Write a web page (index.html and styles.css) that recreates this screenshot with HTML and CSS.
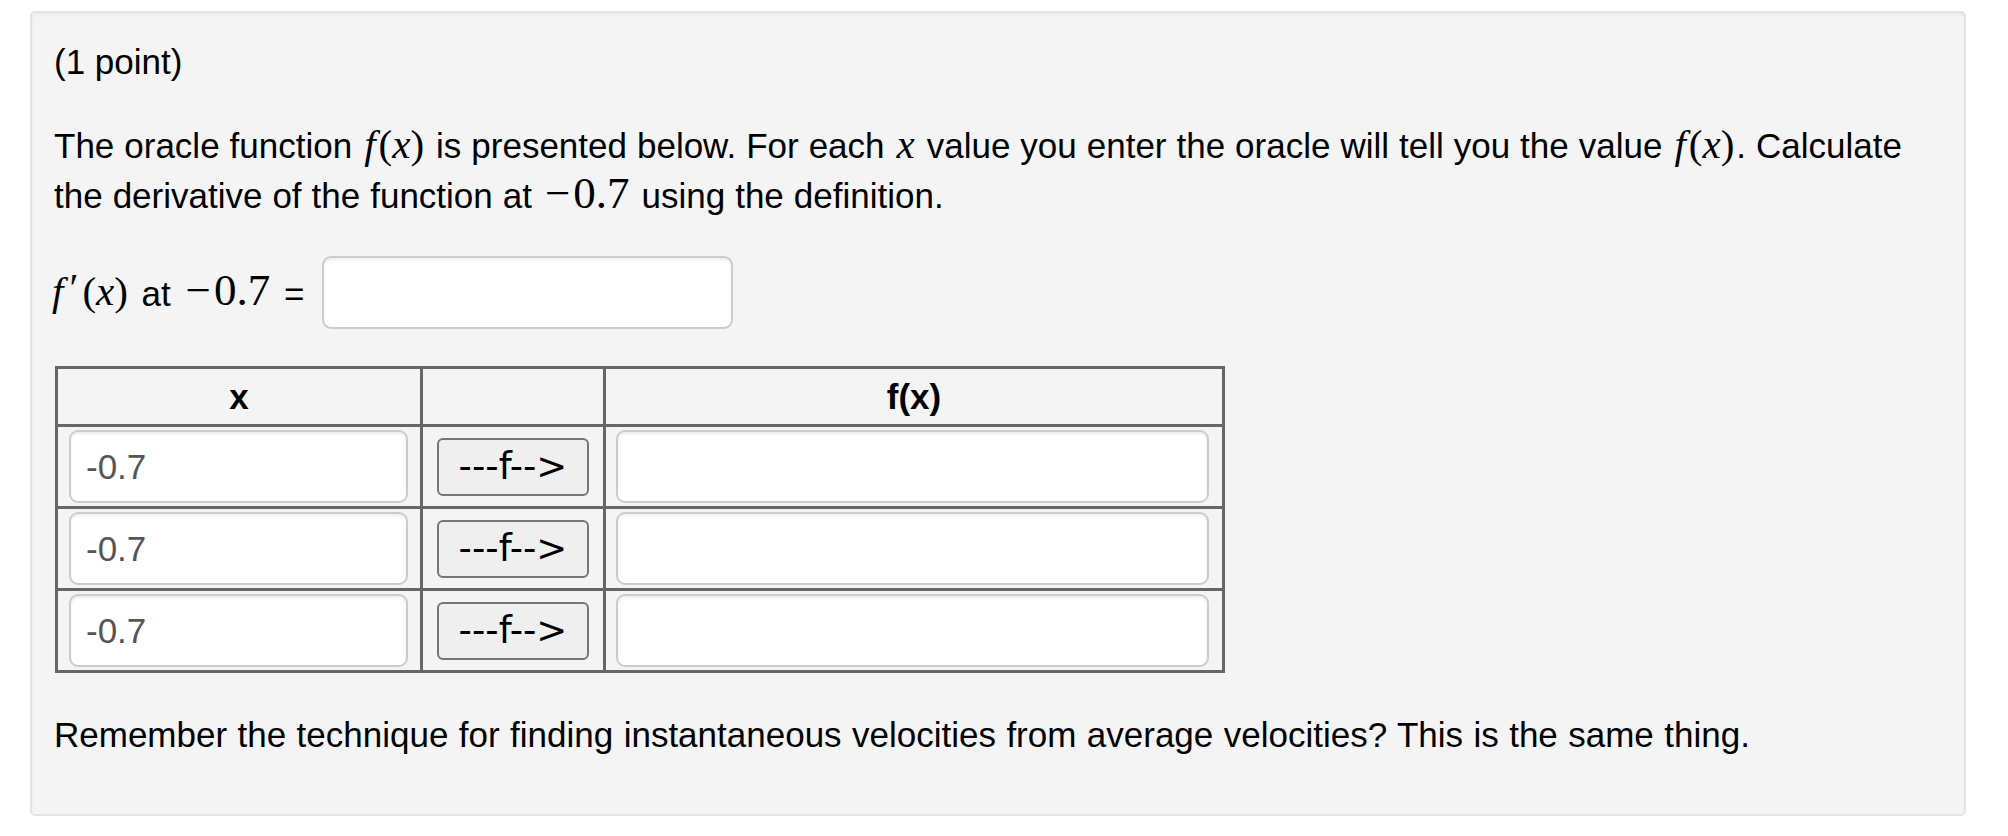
FILE: index.html
```html
<!DOCTYPE html>
<html lang="en">
<head>
<meta charset="utf-8">
<title>Oracle function problem</title>
<link rel="stylesheet" href="styles.css">
</head>
<body>
<div class="panel">
  <div class="points">(1 point)</div>
  <p class="text">The oracle function <span class="m"><span class="mi f">f</span>(<span class="mi">x</span>)</span> is presented below. For each <span class="m"><span class="mi">x</span></span> value you enter the oracle will tell you the value <span class="m"><span class="mi f">f</span>(<span class="mi">x</span>)</span>. Calculate the derivative of the function at <span class="m num"><span class="minus">&minus;</span>0.7</span> using the definition.</p>
  <div class="answer-row">
    <label class="answer-label" for="ans"><span class="m"><span class="mi f">f</span><span class="prime">&prime;</span>(<span class="mi">x</span>)</span> at <span class="m num"><span class="minus">&minus;</span>0.7</span> =</label>
    <input class="answer" id="ans" type="text">
  </div>
  <table class="oracle">
    <colgroup>
      <col class="c1"><col class="c2"><col class="c3">
    </colgroup>
    <thead>
      <tr><th>x</th><th></th><th>f(x)</th></tr>
    </thead>
    <tbody>
      <tr>
        <td class="cx"><input class="cell-input x-in" type="text" value="-0.7"></td>
        <td class="cb"><button class="fbtn" type="button">---f--&gt;</button></td>
        <td class="cf"><input class="cell-input f-in" type="text"></td>
      </tr>
      <tr>
        <td class="cx"><input class="cell-input x-in" type="text" value="-0.7"></td>
        <td class="cb"><button class="fbtn" type="button">---f--&gt;</button></td>
        <td class="cf"><input class="cell-input f-in" type="text"></td>
      </tr>
      <tr>
        <td class="cx"><input class="cell-input x-in" type="text" value="-0.7"></td>
        <td class="cb"><button class="fbtn" type="button">---f--&gt;</button></td>
        <td class="cf"><input class="cell-input f-in" type="text"></td>
      </tr>
    </tbody>
  </table>
  <p class="hint">Remember the technique for finding instantaneous velocities from average velocities? This is the same thing.</p>
</div>
</body>
</html>
```
FILE: styles.css
```css
html, body {
  margin: 0;
  padding: 0;
  background: #ffffff;
}

body {
  font-family: "Liberation Sans", Arial, Helvetica, sans-serif;
  color: #000;
}

.panel {
  margin: 11px 42px 0 30px;
  padding: 24px 22px 54px 22px;
  border: 2px solid #e3e3e3;
  border-radius: 5px;
  background: #f4f4f4;
  box-shadow: inset 0 2px 3px rgba(0, 0, 0, 0.04);
  font-size: 35px;
  line-height: 50px;
}

.points {
  margin: 0 0 34px 0;
}

.text {
  margin: 0;
  word-spacing: 0.25px;
}

.m {
  font-family: "Liberation Serif", "Times New Roman", serif;
  font-size: 41px;
  line-height: 1;
  padding: 0 2px;
}

.m.num {
  font-size: 45px;
}

.minus {
  padding: 0 3px 0 1px;
}

.mi {
  font-style: italic;
}

.mi.f {
  margin-right: 3px;
}

.prime {
  font-style: normal;
  font-size: 1em;
  vertical-align: 0.12em;
  margin: 0 4px 0 3px;
}

.answer-row {
  display: flex;
  align-items: center;
  margin-top: 35px;
}

.answer-label {
  line-height: 50px;
  margin-left: -4px;
  word-spacing: 2px;
}

.answer {
  box-sizing: border-box;
  width: 411px;
  height: 73px;
  margin-left: 18px;
  border: 2px solid #cccccc;
  border-radius: 9px;
  background: #ffffff;
  box-shadow: inset 0 2px 3px rgba(0, 0, 0, 0.075);
  font: 35px "Liberation Sans", Arial, sans-serif;
  color: #555;
  padding: 0 15px;
}

.oracle {
  margin-top: 37px;
  margin-left: 1px;
  border-collapse: collapse;
  table-layout: fixed;
  width: 1167px;
  border: 3px solid #666;
}

.c1 { width: 365px; }
.c2 { width: 183px; }
.c3 { width: 619px; }

.oracle th,
.oracle td {
  border: 3px solid #666;
  padding: 0;
}

.oracle th {
  height: 55px;
  font-weight: bold;
  text-align: center;
  vertical-align: middle;
  line-height: 50px;
}

.oracle td {
  height: 79px;
  vertical-align: middle;
}

.cx { padding-left: 11px !important; }
.cf { padding-left: 10px !important; }
.cb { text-align: center; }

.cell-input {
  box-sizing: border-box;
  display: block;
  height: 73px;
  border: 2px solid #cccccc;
  border-radius: 9px;
  background: #ffffff;
  box-shadow: inset 0 2px 3px rgba(0, 0, 0, 0.075);
  font: 35px "Liberation Sans", Arial, sans-serif;
  color: #555;
  padding: 0 15px;
}

.x-in { width: 339px; }
.f-in { width: 593px; }

.fbtn {
  box-sizing: border-box;
  width: 152px;
  height: 58px;
  border: 2px solid #767676;
  border-radius: 6px;
  background: #efefef;
  color: #000;
  font: 37px "DejaVu Sans", Verdana, sans-serif;
  padding: 0;
  line-height: 54px;
}

.hint {
  margin: 37px 0 0 0;
  word-spacing: 0.7px;
}
```
